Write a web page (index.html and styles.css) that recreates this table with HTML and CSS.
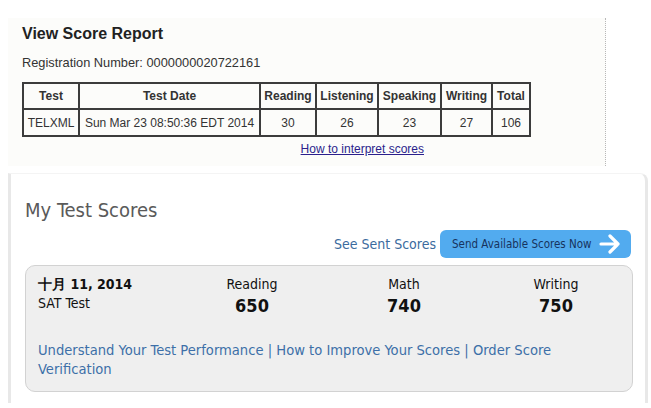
FILE: index.html
```html
<!DOCTYPE html>
<html>
<head>
<meta charset="utf-8">
<link rel="stylesheet" href="styles.css">
</head>
<body>
<div class="report">
  <h1 class="report-title">View Score Report</h1>
  <p class="reg">Registration Number: 0000000020722161</p>
  <table class="scores">
    <tr>
      <th class="c-test">Test</th>
      <th class="c-date">Test Date</th>
      <th class="c-read">Reading</th>
      <th class="c-listen">Listening</th>
      <th class="c-speak">Speaking</th>
      <th class="c-write">Writing</th>
      <th class="c-total">Total</th>
    </tr>
    <tr>
      <td>TELXML</td>
      <td>Sun Mar 23 08:50:36 EDT 2014</td>
      <td>30</td>
      <td>26</td>
      <td>23</td>
      <td>27</td>
      <td>106</td>
    </tr>
  </table>
  <div class="interpret"><a href="#">How to interpret scores</a></div>
</div>

<div class="mytests">
  <h2 class="my-title">My Test Scores</h2>
  <div class="actions">
    <a class="sent" href="#">See Sent Scores</a>
    <a class="send-btn" href="#">
      <span>Send Available Scores Now</span>
      <svg class="arrow" width="22" height="20" viewBox="0 0 22 20">
        <path d="M2 10 H19 M11 2 L19 10 L11 18" fill="none" stroke="#fff" stroke-width="3.2" stroke-linecap="round" stroke-linejoin="round"/>
      </svg>
    </a>
  </div>
  <div class="card">
    <div class="card-grid">
      <div class="test-info">
        <div class="date">十月 11, 2014</div>
        <div class="name">SAT Test</div>
      </div>
      <div class="sec"><div class="sec-label">Reading</div><div class="sec-score">650</div></div>
      <div class="sec"><div class="sec-label">Math</div><div class="sec-score">740</div></div>
      <div class="sec"><div class="sec-label">Writing</div><div class="sec-score">750</div></div>
    </div>
    <p class="links"><a href="#">Understand Your Test Performance</a> | <a href="#">How to Improve Your Scores</a> | <a href="#">Order Score Verification</a></p>
  </div>
</div>
</body>
</html>
```

FILE: styles.css
```css
html, body {
  margin: 0;
  padding: 0;
  background: #ffffff;
}
body {
  width: 651px;
  height: 408px;
  overflow: hidden;
}
.report {
  margin: 18px 0 0 8px;
  width: 598px;
  background: #fcfcfa;
  border-right: 1px dotted #b8b8b8;
  padding: 6px 0 10px 14px;
  box-sizing: border-box;
  font-family: "Liberation Sans", Arial, sans-serif;
  color: #222;
}
.report-title {
  margin: 0;
  font-size: 16px;
  line-height: 20px;
  font-weight: bold;
  color: #222;
}
.reg {
  margin: 11px 0 0;
  font-size: 12.8px;
  line-height: 16px;
  color: #333;
}
.scores {
  margin-top: 11px;
  border-collapse: collapse;
  table-layout: fixed;
  width: 509px;
  font-size: 12px;
  color: #333;
}
.scores th, .scores td {
  border: 2px solid #3c3c3c;
  text-align: center;
  padding: 0;
}
.scores th {
  height: 24px;
  font-weight: bold;
  color: #333;
}
.scores td {
  height: 25px;
}
.c-test { width: 54px; }
.c-date { width: 179px; }
.c-read { width: 54px; }
.c-listen { width: 60px; }
.c-speak { width: 61px; }
.c-write { width: 49px; }
.c-total { width: 36px; }
.interpret {
  width: 507px;
  text-align: right;
  margin-top: 5px;
  font-size: 12px;
  line-height: 14px;
  padding-right: 105px;
  box-sizing: border-box;
}
.interpret a {
  color: #2b1f8c;
  text-decoration: underline;
}

.mytests {
  margin: 7px 3px 0 8px;
  height: 230px;
  box-sizing: border-box;
  border-left: 3px solid #e8e8e8;
  border-right: 3px solid #e8e8e8;
  border-top: 1px solid #f4f4f4;
  border-top-right-radius: 8px;
  padding: 24px 12px 0 14px;
  font-family: "DejaVu Sans Condensed", "DejaVu Sans", sans-serif;
}
.my-title {
  margin: 0;
  font-size: 20px;
  line-height: 24px;
  font-weight: normal;
  color: #5a5a5a;
}
.actions {
  margin-top: 8px;
  display: flex;
  justify-content: flex-end;
  align-items: center;
  gap: 4px;
  padding-right: 2px;
}
.sent {
  color: #3b6b9e;
  text-decoration: none;
  font-size: 14px;
}
.send-btn {
  display: flex;
  align-items: center;
  justify-content: space-between;
  width: 191px;
  height: 28px;
  box-sizing: border-box;
  padding: 0 10px 0 12px;
  background: #52abef;
  border-radius: 6px;
  color: #17335e;
  text-decoration: none;
  font-size: 11.5px;
}
.card {
  margin-top: 7px;
  background: #efefef;
  border: 1px solid #d2d2d2;
  border-radius: 10px;
  padding: 9px 0 13px 12px;
}
.card-grid {
  display: grid;
  grid-template-columns: 138px 152px 152px 152px;
  font-size: 14px;
  line-height: 19px;
  color: #111;
}
.date {
  font-weight: bold;
}
.sec {
  text-align: center;
}
.sec-score {
  font-weight: bold;
  font-size: 18px;
  line-height: 23px;
}
.links {
  margin: 23px 0 0;
  font-size: 14.6px;
  line-height: 19px;
  color: #3d6fa8;
  padding-right: 50px;
}
.links a {
  color: #3d6fa8;
  text-decoration: none;
}
```
